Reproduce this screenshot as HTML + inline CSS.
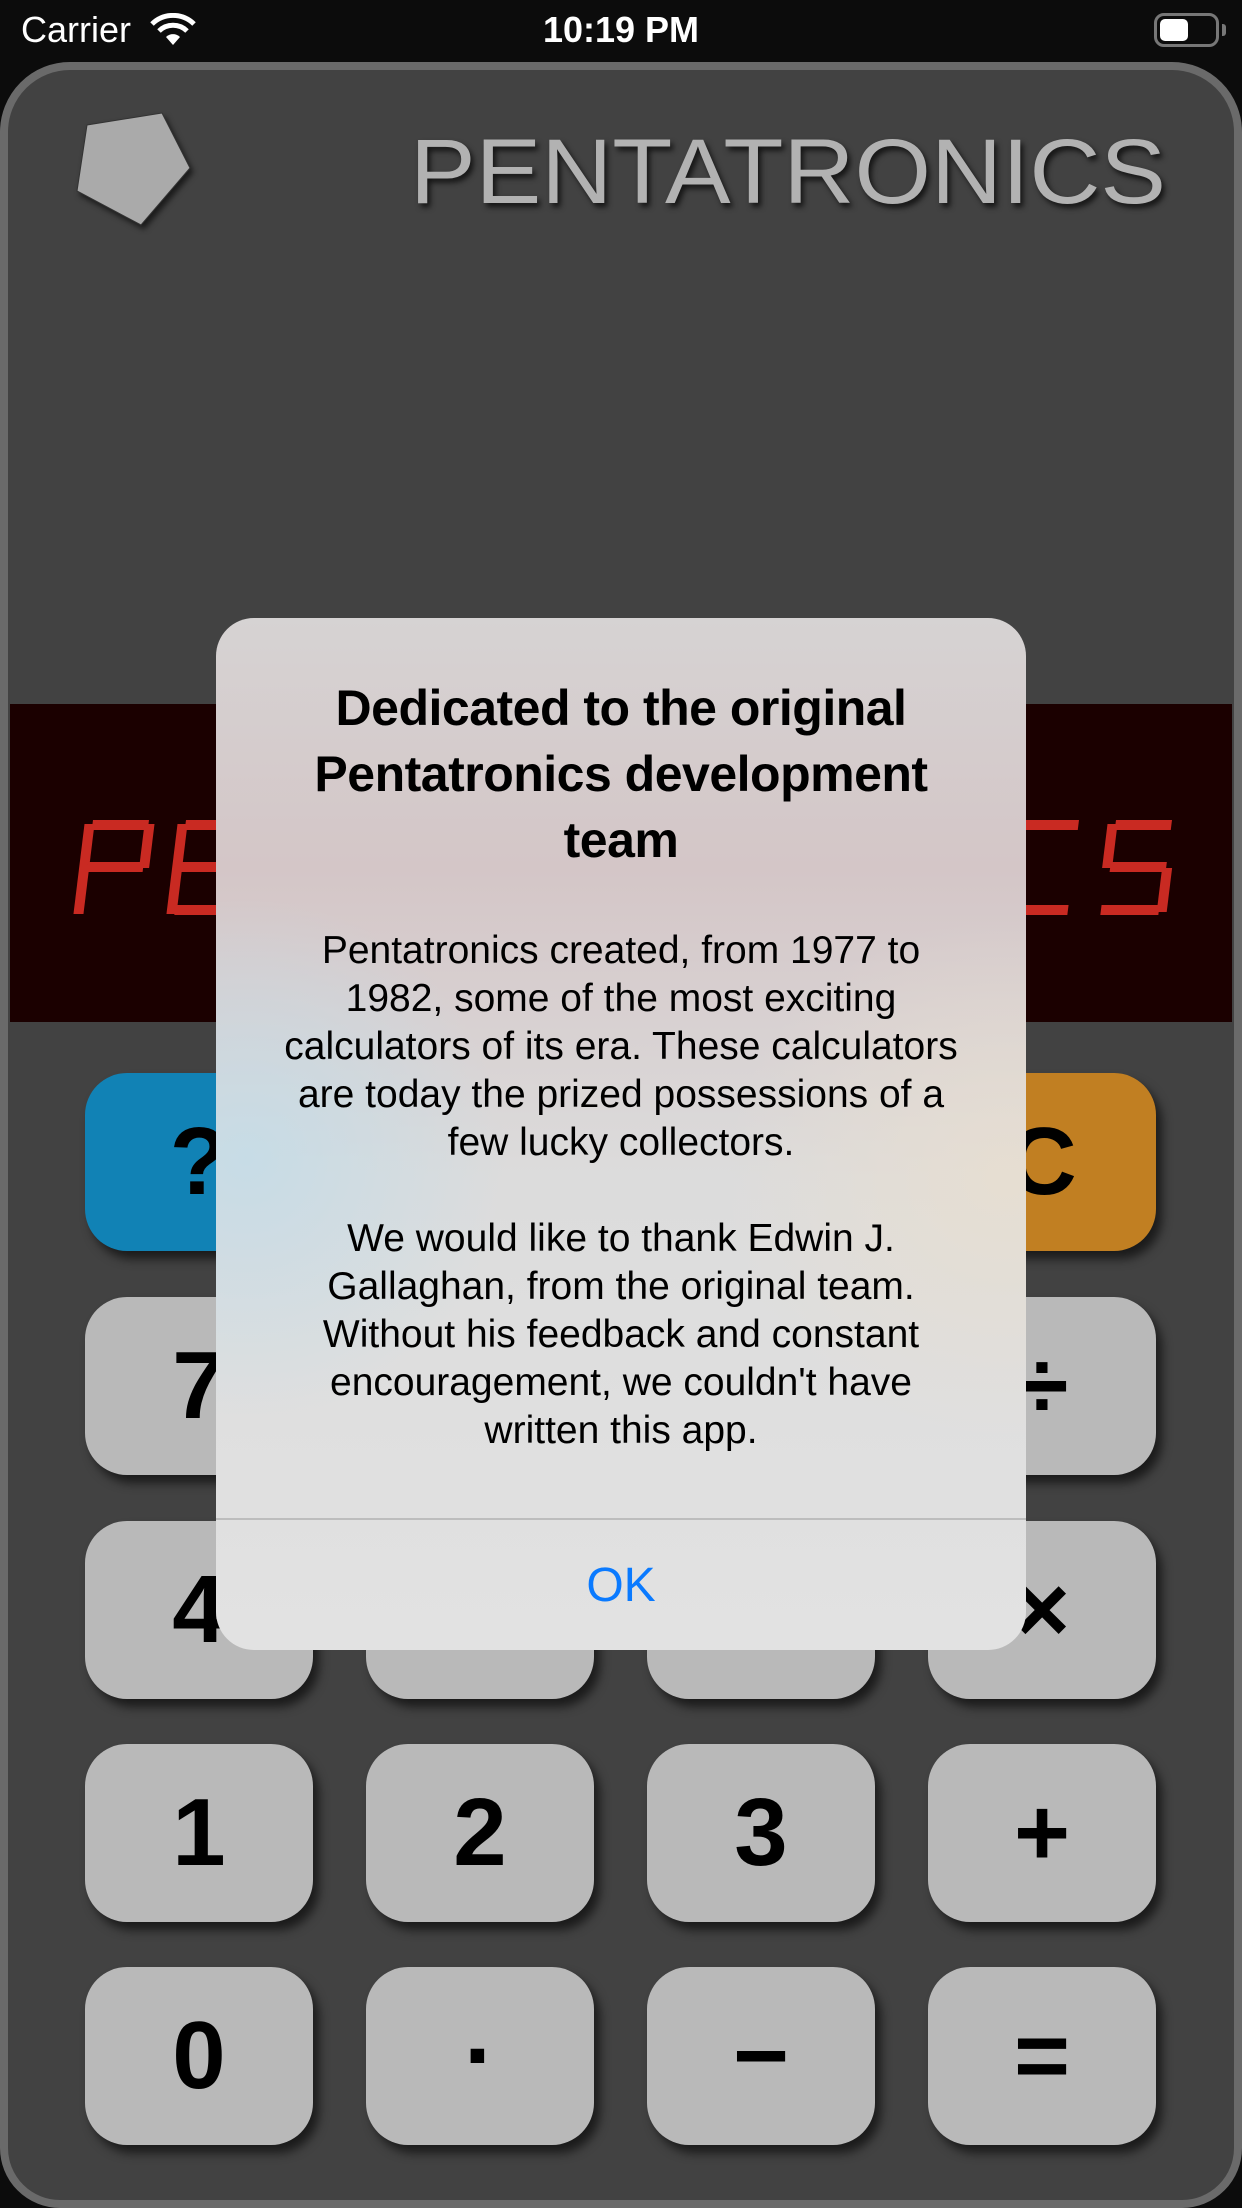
<!DOCTYPE html>
<html><head><meta charset="utf-8">
<style>
*{margin:0;padding:0;box-sizing:border-box}
html,body{width:1242px;height:2208px;overflow:hidden;background:#0c0c0c;font-family:"Liberation Sans",sans-serif}
.sb{position:absolute;left:0;top:0;width:1242px;height:62px;background:#0c0c0c;color:#fff}
.body{position:absolute;left:0;top:62px;width:1242px;height:2146px;background:#424242;border:8px solid #6a6a6a;border-radius:70px 70px 60px 60px}
.btn{position:absolute;width:228px;height:178px;border-radius:42px;background:#b9b9b9;box-shadow:6px 8px 10px rgba(0,0,0,.6);display:flex;align-items:center;justify-content:center;font-weight:bold;font-size:96px;color:#000}
.modal{position:absolute;left:216px;top:618px;width:810px;height:1032px;border-radius:38px;overflow:hidden;
background:radial-gradient(ellipse 260px 260px at 30px 540px,rgba(195,220,232,.85),rgba(195,220,232,0)),
radial-gradient(ellipse 280px 260px at 790px 560px,rgba(232,222,208,.85),rgba(232,222,208,0)),
linear-gradient(#d6d3d3 0px,#d4c6c7 250px,#dcdcdc 560px,#e2e2e2 1032px);color:#000;text-align:center}
.t{position:absolute;top:57px;left:0;width:810px;font-size:50px;font-weight:bold;line-height:66px;letter-spacing:-0.5px}
.p{position:absolute;top:309px;left:0;width:810px;font-size:39px;line-height:48px}
.sep{position:absolute;top:900px;left:0;width:810px;height:2px;background:#bdbdbd}
.ok{position:absolute;top:938px;left:0;width:810px;font-size:48px;color:#0a7aff;line-height:60px}
</style></head><body>
<div class="sb">
<div style="position:absolute;left:21px;top:9px;font-size:36px">Carrier</div>
<svg style="position:absolute;left:150px;top:13px" width="46" height="34" viewBox="0 0 46 34"><path d="M23 32 L16 24 A10 10 0 0 1 30 24 Z" fill="#fff"/><path d="M9 18 A20 20 0 0 1 37 18" stroke="#fff" stroke-width="5" fill="none"/><path d="M2 11 A30 30 0 0 1 44 11" stroke="#fff" stroke-width="5" fill="none"/></svg>
<div style="position:absolute;left:0;width:1242px;top:9px;text-align:center;font-size:36px;font-weight:bold">10:19 PM</div>
<div style="position:absolute;left:1154px;top:13px;width:65px;height:34px;border:3px solid #777;border-radius:10px"></div>
<div style="position:absolute;left:1160px;top:19px;width:28px;height:22px;background:#fff;border-radius:5px"></div>
<div style="position:absolute;left:1222px;top:24px;width:4px;height:12px;background:#777;border-radius:0 3px 3px 0"></div>
</div>
<div class="body"></div>
<svg style="position:absolute;left:0;top:0" width="1242" height="1100">
<polygon points="87,125 162,113 190,168 141,225 77,191" fill="#aaa" stroke="#333" stroke-width="1" style="filter:drop-shadow(3px 4px 3px rgba(0,0,0,.6))"/>
<text x="410" y="203" font-family="Liberation Sans" font-size="92" fill="#b2b2b2" textLength="756" lengthAdjust="spacingAndGlyphs" style="filter:drop-shadow(3px 4px 3px rgba(0,0,0,.7))">PENTATRONICS</text>
<rect x="10" y="704" width="1222" height="318" fill="#1b0000"/>
<g fill="#c92a22" transform="translate(0,820) skewX(-7)">
 <g transform="translate(85,0)">
  <rect x="8" y="0" width="56" height="10"/><rect x="0" y="4" width="10" height="44"/><rect x="60" y="4" width="10" height="44"/><rect x="8" y="42" width="56" height="10"/><rect x="0" y="48" width="10" height="46"/>
 </g>
 <g transform="translate(178,0)">
  <rect x="8" y="0" width="56" height="10"/><rect x="0" y="4" width="10" height="44"/><rect x="8" y="42" width="48" height="10"/><rect x="0" y="48" width="10" height="46"/><rect x="8" y="85" width="56" height="10"/>
 </g>
 <g transform="translate(1015,0)">
  <rect x="8" y="0" width="56" height="10"/><rect x="0" y="4" width="10" height="44"/><rect x="0" y="48" width="10" height="46"/><rect x="8" y="85" width="56" height="10"/>
 </g>
 <g transform="translate(1108,0)">
  <rect x="8" y="0" width="56" height="10"/><rect x="0" y="4" width="10" height="44"/><rect x="8" y="42" width="56" height="10"/><rect x="60" y="48" width="10" height="44"/><rect x="4" y="85" width="58" height="10"/>
 </g>
</g>
</svg>
<div class="btn" style="left:85px;top:1073px;background:#1182b5">?</div>
<div class="btn" style="left:366px;top:1073px">√</div>
<div class="btn" style="left:647px;top:1073px">%</div>
<div class="btn" style="left:928px;top:1073px;background:#c17f22">C</div>
<div class="btn" style="left:85px;top:1297px">7</div>
<div class="btn" style="left:366px;top:1297px">8</div>
<div class="btn" style="left:647px;top:1297px">9</div>
<div class="btn" style="left:928px;top:1297px">÷</div>
<div class="btn" style="left:85px;top:1521px">4</div>
<div class="btn" style="left:366px;top:1521px">5</div>
<div class="btn" style="left:647px;top:1521px">6</div>
<div class="btn" style="left:928px;top:1521px">×</div>
<div class="btn" style="left:85px;top:1744px">1</div>
<div class="btn" style="left:366px;top:1744px">2</div>
<div class="btn" style="left:647px;top:1744px">3</div>
<div class="btn" style="left:928px;top:1744px">+</div>
<div class="btn" style="left:85px;top:1967px">0</div>
<div class="btn" style="left:366px;top:1967px">·</div>
<div class="btn" style="left:647px;top:1967px">−</div>
<div class="btn" style="left:928px;top:1967px">=</div>
<div class="modal">
<div class="t">Dedicated to the original<br>Pentatronics development<br>team</div>
<div class="p">Pentatronics created, from 1977 to<br>1982, some of the most exciting<br>calculators of its era. These calculators<br>are today the prized possessions of a<br>few lucky collectors.<br><br>We would like to thank Edwin J.<br>Gallaghan, from the original team.<br>Without his feedback and constant<br>encouragement, we couldn't have<br>written this app.</div>
<div class="sep"></div>
<div class="ok">OK</div>
</div>
</body></html>
